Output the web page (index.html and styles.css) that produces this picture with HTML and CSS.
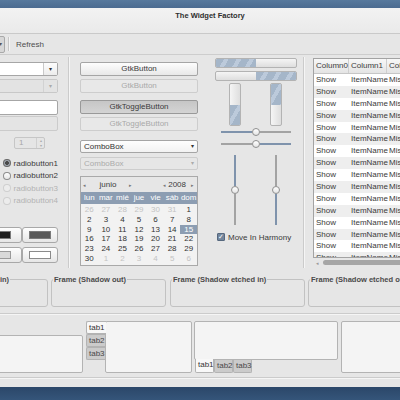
FILE: index.html
```html
<!DOCTYPE html>
<html>
<head>
    <link rel="stylesheet" href="styles.css">
</head>
<body>
    <div class="window">
        <div class="titlebar">The Widget Factory</div>
        <div class="toolbar">
            <div class="tool-pressed">▾</div>
            <div class="tool-sep"></div>
            <div class="tool-btn">Refresh</div>
        </div>

        <div class="main">
            <div class="col col-entries">
                <div class="combo-entry">
                    <div class="combo-text"></div>
                    <div class="combo-arrow">▾</div>
                </div>
                <div class="combo-entry disabled">
                    <div class="combo-text"></div>
                    <div class="combo-arrow">▾</div>
                </div>
                <div class="entry"></div>
                <div class="entry disabled"></div>
                <div class="spin">
                    <span class="spin-value">1</span>
                    <span class="spin-arrows"><span>▴</span><span>▾</span></span>
                </div>
                <div class="radios">
                    <div class="radio checked"><span class="dot"></span>radiobutton1</div>
                    <div class="radio"><span class="dot"></span>radiobutton2</div>
                    <div class="radio disabled"><span class="dot"></span>radiobutton3</div>
                    <div class="radio disabled"><span class="dot"></span>radiobutton4</div>
                </div>
                <div class="color-row">
                    <div class="color-btn first"><span class="swatch black"></span></div>
                    <div class="color-btn"><span class="swatch dark"></span></div>
                </div>
                <div class="color-row">
                    <div class="color-btn first"><span class="swatch light"></span></div>
                    <div class="color-btn"><span class="swatch white"></span></div>
                </div>
            </div>

            <div class="vsep"></div>

            <div class="col col-buttons">
                <div class="btn">GtkButton</div>
                <div class="btn disabled">GtkButton</div>
                <div class="btn active">GtkToggleButton</div>
                <div class="btn disabled">GtkToggleButton</div>
                <div class="combo">ComboBox<span class="arrow">▾</span></div>
                <div class="combo disabled">ComboBox<span class="arrow">▾</span></div>

                <div class="calendar">
                    <div class="cal-head">
                        <span class="cal-arrow">◂</span>
                        <span class="cal-month">junio</span>
                        <span class="cal-arrow">▸</span>
                        <span class="cal-spacer"></span>
                        <span class="cal-arrow">◂</span>
                        <span class="cal-year">2008</span>
                        <span class="cal-arrow">▸</span>
                    </div>
                    <div class="cal-days">
                        <span>lun</span><span>mar</span><span>mié</span><span>jue</span><span>vie</span><span>sáb</span><span>dom</span>
                    </div>
                    <div class="cal-grid">
                        <span class="other">26</span><span class="other">27</span><span class="other">28</span><span class="other">29</span><span class="other">30</span><span class="other">31</span><span>1</span>
                        <span>2</span><span>3</span><span>4</span><span>5</span><span>6</span><span>7</span><span>8</span>
                        <span>9</span><span>10</span><span>11</span><span>12</span><span>13</span><span>14</span><span class="selected">15</span>
                        <span>16</span><span>17</span><span>18</span><span>19</span><span>20</span><span>21</span><span>22</span>
                        <span>23</span><span>24</span><span>25</span><span>26</span><span>27</span><span>28</span><span>29</span>
                        <span>30</span><span class="other">1</span><span class="other">2</span><span class="other">3</span><span class="other">4</span><span class="other">5</span><span class="other">6</span>
                    </div>
                </div>
            </div>

            <div class="col col-ranges">
                <div class="hprogress"><div class="fill"></div></div>
                <div class="hprogress inverted"><div class="fill"></div></div>
                <div class="vprogress-row">
                    <div class="vprogress"><div class="fill"></div></div>
                    <div class="vprogress inverted"><div class="fill"></div></div>
                </div>
                <div class="hslider">
                    <span class="line blue"></span><span class="knob"></span><span class="line"></span>
                </div>
                <div class="hslider">
                    <span class="line"></span><span class="knob"></span><span class="line blue"></span>
                </div>
                <div class="vslider-row">
                    <div class="vslider">
                        <span class="line blue"></span><span class="knob"></span><span class="line"></span>
                    </div>
                    <div class="vslider">
                        <span class="line"></span><span class="knob"></span><span class="line blue"></span>
                    </div>
                </div>
                <div class="check">
                    <span class="box">✓</span>Move In Harmony
                </div>
            </div>

            <div class="vsep narrow"></div>

            <div class="tree-wrap">
                <div class="tree">
                    <div class="tree-head">
                        <span>Column0</span><span>Column1</span><span>Column2</span>
                    </div>
                    <div class="tree-body" id="tree-body"></div>
                </div>
                <div class="hscroll">
                    <span class="scroll-arrow">◂</span>
                    <span class="thumb"></span>
                </div>
            </div>
        </div>

        <div class="frames">
            <fieldset class="frame f-in"><legend>Frame (Shadow in)</legend></fieldset>
            <fieldset class="frame f-out"><legend>Frame (Shadow out)</legend></fieldset>
            <fieldset class="frame f-etched-in"><legend>Frame (Shadow etched in)</legend></fieldset>
            <fieldset class="frame f-etched-out"><legend>Frame (Shadow etched out)</legend></fieldset>
        </div>

        <div class="hsep"></div>

        <div class="notebooks">
            <div class="nb nb-top">
                <div class="page"></div>
            </div>
            <div class="nb nb-left">
                <div class="tabs">
                    <div class="tab current">tab1</div>
                    <div class="tab">tab2</div>
                    <div class="tab">tab3</div>
                </div>
                <div class="page"></div>
            </div>
            <div class="nb nb-bottom">
                <div class="page"></div>
                <div class="tabs">
                    <div class="tab current">tab1</div>
                    <div class="tab">tab2</div>
                    <div class="tab">tab3</div>
                </div>
            </div>
            <div class="nb nb-right">
                <div class="page"></div>
            </div>
        </div>

        <div class="hsep bottom"></div>
    </div>

    <script>
        const body = document.getElementById('tree-body');
        for (let i = 0; i < 16; i++) {
            const row = document.createElement('div');
            row.className = 'tree-row';
            row.innerHTML = '<span>Show</span><span>ItemName</span><span>Missing</span>';
            body.appendChild(row);
        }
    </script>
</body>
</html>
```

FILE: styles.css
```css
* {
    box-sizing: border-box;
}

body {
    margin: 0;
    width: 400px;
    height: 400px;
    overflow: hidden;
    background: linear-gradient(#57799d 0, #4b6b90 8px, #2c486a 388px, #35557a 400px);
    font-family: "Liberation Sans", Arial, sans-serif;
    font-size: 8px;
    color: #3c3c3c;
}

.window {
    margin: 8px 0 0 -60px;
    width: 500px;
    height: 379px;
    background: #e6e6e6;
    overflow: hidden;
}

.titlebar {
    height: 26px;
    padding: 3px 0 0 40px;
    line-height: 9px;
    text-align: center;
    font-weight: bold;
    font-size: 7.5px;
    color: #2e2e2e;
    background: linear-gradient(#f2f2f2, #eaeaea);
    border-bottom: 1px solid #c9c9c9;
}

.toolbar {
    height: 21px;
    display: flex;
    align-items: center;
    padding-left: 40px;
    border-bottom: 1px solid #cdcdcd;
}

.tool-pressed {
    width: 25px;
    height: 17px;
    border: 1px solid #a9a9a9;
    border-radius: 2px;
    background: #d7d7d7;
    font-size: 6px;
    line-height: 15px;
    text-align: right;
    padding-right: 2px;
    color: #555;
}

.tool-sep {
    width: 2px;
    height: 14px;
    margin-left: 3px;
    border-left: 1px solid #c6c6c6;
    border-right: 1px solid #f4f4f4;
}

.tool-btn {
    margin-left: 6px;
    color: #4e4e4e;
}

/* main area */

.main {
    display: flex;
    height: 215px;
    padding-left: 40px;
}

.col {
    display: flex;
    flex-direction: column;
}

.col-entries {
    width: 78px;
    padding-top: 7px;
}

.combo-entry {
    display: flex;
    height: 14px;
    border: 1px solid #a6a6a6;
    border-radius: 2px;
    background: #fff;
}

.combo-entry + .combo-entry {
    margin-top: 3px;
}

.combo-text {
    flex: 1;
}

.combo-arrow {
    width: 14px;
    border-left: 1px solid #c9c9c9;
    background: linear-gradient(#fdfdfd, #ececec);
    text-align: center;
    font-size: 6px;
    line-height: 12px;
    color: #333;
}

.combo-entry.disabled {
    background: #e3e3e3;
    border-color: #c8c8c8;
}

.combo-entry.disabled .combo-arrow {
    background: #e3e3e3;
    border-left-color: #d2d2d2;
    color: #aaa;
}

.entry {
    height: 15px;
    margin-top: 7px;
    border: 1px solid #a6a6a6;
    border-radius: 2px;
    background: #fff;
}

.entry.disabled {
    margin-top: 1px;
    background: #e4e4e4;
    border-color: #cbcbcb;
}

.spin {
    display: flex;
    width: 31px;
    height: 12px;
    margin: 6px 0 0 34px;
    border: 1px solid #c6c6c6;
    border-radius: 2px;
    background: #e5e5e5;
    color: #a8a8a8;
}

.spin-value {
    flex: 1;
    padding-left: 4px;
    line-height: 10px;
}

.spin-arrows {
    width: 8px;
    display: flex;
    flex-direction: column;
    border-left: 1px solid #d0d0d0;
    font-size: 4px;
    line-height: 5px;
    text-align: center;
    color: #aaa;
}

.radios {
    margin-top: 8px;
}

.radio {
    height: 12.5px;
    display: flex;
    align-items: center;
    padding-left: 23px;
    color: #3a3a3a;
}

.radio .dot {
    width: 8px;
    height: 8px;
    margin-right: 3px;
    border-radius: 50%;
    border: 1px solid #8e8e8e;
    background: linear-gradient(#ffffff, #e6e6e6);
}

.radio.checked .dot {
    background: radial-gradient(circle, #4b4b4b 0 1.6px, #9ca3ac 2.2px 100%);
    border-color: #6a6a6a;
}

.radio.disabled {
    color: #b3b3b3;
}

.radio.disabled .dot {
    border-color: #cfcfcf;
    background: #ececec;
}

.color-row {
    display: flex;
    margin-top: 20px;
}

.color-row + .color-row {
    margin-top: 4px;
}

.color-btn {
    display: flex;
    width: 36px;
    height: 16px;
    padding: 3px 6px;
    border: 1px solid #a8a8a8;
    border-radius: 3px;
    background: linear-gradient(#fefefe, #e6e6e6);
}

.color-btn.first {
    width: 42px;
    padding-right: 10px;
}

.swatch {
    flex: 1;
    border: 1px solid #7a7a7a;
}

.swatch.black { background: #1e1e1e; }
.swatch.dark { background: #5a5a5a; }
.swatch.light { background: #d9d9d9; border-color: #9a9a9a; }
.swatch.white { background: #fff; border-color: #8a8a8a; }

.vsep {
    width: 2px;
    height: 211px;
    margin: 2px 10px 0 10px;
    border-left: 1px solid #cbcbcb;
    border-right: 1px solid #f5f5f5;
}

.vsep.narrow {
    margin: 2px 8px 0 6px;
}

.col-buttons {
    width: 118px;
    padding-top: 7px;
}

.btn {
    height: 14px;
    border: 1px solid #a5a5a5;
    border-radius: 2px;
    background: linear-gradient(#fdfdfd, #e8e8e8);
    text-align: center;
    line-height: 12px;
    color: #3a3a3a;
}

.btn + .btn {
    margin-top: 3px;
}

.btn.active {
    margin-top: 7px;
    background: linear-gradient(#c6c6c6, #d4d4d4);
    border-color: #999;
}

.btn.disabled {
    color: #a8a8a8;
    border-color: #cdcdcd;
    background: #e8e8e8;
}

.combo {
    display: flex;
    justify-content: space-between;
    height: 13px;
    margin-top: 9px;
    padding: 0 3px 0 3px;
    border: 1px solid #a5a5a5;
    border-radius: 2px;
    background: linear-gradient(#fefefe, #f2f2f2);
    line-height: 11px;
    color: #333;
}

.combo .arrow {
    font-size: 6px;
}

.combo.disabled {
    margin-top: 4px;
    color: #ababab;
    border-color: #cdcdcd;
    background: #e6e6e6;
}

.calendar {
    height: 90px;
    margin-top: 6px;
    border: 1px solid #a9a9a9;
    background: #f2f2f2;
}

.cal-head {
    display: flex;
    align-items: center;
    height: 15px;
    padding: 0 2px;
    background: #e6e6e6;
}

.cal-arrow {
    width: 4px;
    font-size: 5px;
    color: #777;
}

.cal-month {
    width: 42px;
    text-align: center;
}

.cal-spacer {
    flex: 1;
}

.cal-year {
    margin: 0 5px 0 1px;
}

.cal-days {
    display: grid;
    grid-template-columns: repeat(7, 1fr);
    height: 12px;
    line-height: 12px;
    background: #8c9db2;
    color: #fff;
    text-align: center;
}

.cal-grid {
    display: grid;
    grid-template-columns: repeat(7, 1fr);
    grid-auto-rows: 9.8px;
    padding-top: 1px;
    text-align: center;
    line-height: 9.8px;
    color: #333;
}

.cal-grid .other {
    color: #c3c3c3;
}

.cal-grid .selected {
    background: #8c9db2;
    color: #fff;
}

/* ranges */

.col-ranges {
    width: 82px;
    margin-left: 17px;
    padding-top: 3px;
}

.hprogress {
    display: flex;
    height: 10px;
    border: 1px solid #b3b3b3;
    border-radius: 2px;
    background: linear-gradient(#f5f5f5, #dedede);
    overflow: hidden;
}

.hprogress + .hprogress {
    margin-top: 3px;
}

.hprogress .fill,
.vprogress .fill {
    background: repeating-linear-gradient(120deg, #a5b6c9 0 7px, #bccadb 7px 11px);
}

.hprogress .fill {
    width: 50%;
}

.hprogress.inverted {
    justify-content: flex-end;
}

.vprogress-row {
    display: flex;
    gap: 29px;
    padding-left: 14px;
    margin-top: 2px;
}

.vprogress {
    display: flex;
    flex-direction: column;
    justify-content: flex-end;
    width: 12px;
    height: 43px;
    border: 1px solid #b3b3b3;
    border-radius: 2px;
    background: linear-gradient(90deg, #f5f5f5, #dedede);
    overflow: hidden;
}

.vprogress.inverted {
    justify-content: flex-start;
}

.vprogress .fill {
    height: 50%;
}

.hslider {
    display: flex;
    align-items: center;
    width: 70px;
    height: 8px;
    margin: 2px 0 0 6px;
}

.hslider + .hslider {
    margin-top: 4px;
}

.hslider .line {
    flex: 1;
    height: 2px;
    background: #a3a3a3;
}

.line.blue {
    background: #7f93ac;
}

.knob {
    width: 8px;
    height: 8px;
    border-radius: 50%;
    border: 1px solid #8f8f8f;
    background: linear-gradient(#ffffff, #e4e4e4);
}

.vslider-row {
    display: flex;
    gap: 33px;
    padding-left: 16px;
    margin-top: 7px;
}

.vslider {
    display: flex;
    flex-direction: column;
    align-items: center;
    width: 8px;
    height: 70px;
}

.vslider .line {
    flex: 1;
    width: 2px;
    background: #a3a3a3;
}

.vslider .line.blue {
    background: #7f93ac;
}

.check {
    display: flex;
    align-items: center;
    height: 10px;
    margin: 7px 0 0 2px;
    color: #3a3a3a;
}

.check .box {
    width: 8px;
    height: 8px;
    margin-right: 3px;
    border: 1px solid #56687e;
    border-radius: 1px;
    background: #72859c;
    color: #fff;
    font-size: 7px;
    line-height: 6px;
    text-align: center;
}

/* tree view */

.tree-wrap {
    flex: 1;
    padding-top: 3px;
}

.tree {
    height: 200px;
    border: 1px solid #a3a3a3;
    background: #fff;
    overflow: hidden;
}

.tree-head,
.tree-row {
    display: grid;
    grid-template-columns: 35px 38px 1fr;
}

.tree-head {
    height: 15px;
    line-height: 14px;
    background: linear-gradient(#f8f8f8, #e4e4e4);
    border-bottom: 1px solid #c6c6c6;
}

.tree-head span {
    padding-left: 2px;
    border-right: 1px solid #cfcfcf;
}

.tree-row {
    height: 11.9px;
    line-height: 11.9px;
    color: #3a3a3a;
}

.tree-row span {
    padding-left: 2px;
    white-space: nowrap;
}

.tree-row:nth-child(even) {
    background: #eeeeee;
}

.hscroll {
    display: flex;
    align-items: center;
    height: 7px;
    margin-top: 1px;
}

.scroll-arrow {
    width: 10px;
    padding-left: 3px;
    font-size: 5px;
    color: #999;
}

.thumb {
    flex: 1;
    height: 5px;
    border-radius: 3px;
    background: #a6a6a6;
}

/* frames */

.frames {
    display: flex;
    margin-top: 5px;
}

.frame {
    height: 32px;
    margin: 0;
    padding: 0;
    border: 1px solid #c2c2c2;
    border-radius: 3px;
}

.frame legend {
    padding: 0 1px;
    margin-left: 1px;
    font-weight: bold;
    font-size: 7.5px;
    line-height: 9px;
    color: #4a4a4a;
}

.f-in { width: 109px; margin-left: -1px; }
.f-out { width: 115px; margin-left: 3px; }
.f-etched-in { width: 135px; margin-left: 4px; }
.f-etched-out { width: 132px; margin-left: 3px; }

.hsep {
    height: 2px;
    margin-top: 6px;
    border-top: 1px solid #cbcbcb;
    border-bottom: 1px solid #f5f5f5;
}

.hsep.bottom {
    margin-top: 3px;
}

/* notebooks */

.notebooks {
    display: flex;
    height: 53px;
    margin-top: 6px;
    padding-left: 20px;
}

.nb .page {
    border: 1px solid #b3b3b3;
    border-radius: 2px;
    background: #f4f4f4;
}

.nb-top {
    width: 124px;
    padding-top: 14px;
}

.nb-top .page {
    height: 38px;
}

.nb-left {
    display: flex;
    margin-left: 3px;
}

.nb-left .tabs {
    width: 19px;
}

.nb-left .page {
    width: 87px;
    height: 52px;
}

.tab {
    height: 13px;
    padding-left: 2px;
    line-height: 12px;
    border: 1px solid #b3b3b3;
    background: #cbcbcb;
    color: #484848;
}

.nb-left .tab {
    border-right: none;
    border-radius: 2px 0 0 2px;
}

.nb-left .tab.current {
    position: relative;
    margin-right: -1px;
    background: #f8f8f8;
    color: #333;
}

.nb-bottom {
    display: flex;
    flex-direction: column;
    width: 145px;
    margin-left: 2px;
}

.nb-bottom .page {
    height: 39px;
}

.nb-bottom .tabs {
    display: flex;
    padding-left: 1px;
}

.nb-bottom .tab {
    width: 19px;
    border-top: none;
    border-radius: 0 0 2px 2px;
}

.nb-bottom .tab.current {
    position: relative;
    margin-top: -1px;
    height: 14px;
    background: #f8f8f8;
    color: #333;
}

.nb-right {
    width: 100px;
    margin-left: 3px;
}

.nb-right .page {
    height: 52px;
}
```
